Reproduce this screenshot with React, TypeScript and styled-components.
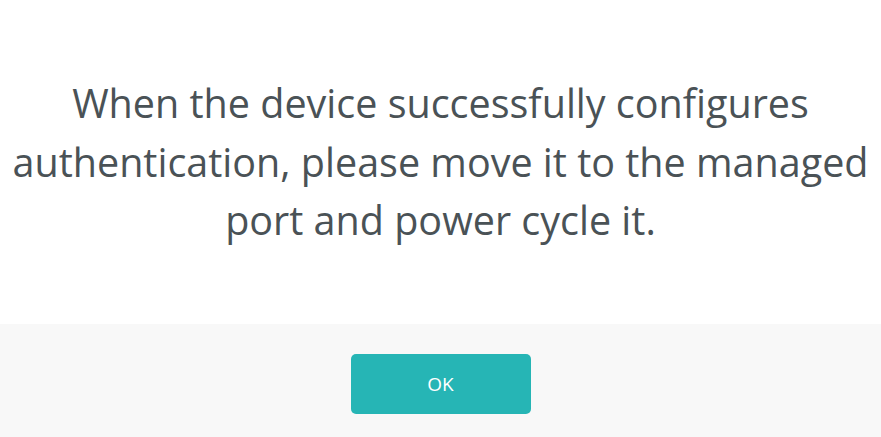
import React from 'react';
import styled, { createGlobalStyle } from 'styled-components';

const GlobalStyle = createGlobalStyle`
  html, body {
    margin: 0;
    padding: 0;
    background: #ffffff;
  }
  body {
    font-family: "Open Sans", "Noto Sans", sans-serif;
  }
`;

const Dialog = styled.div`
  width: 881px;
  height: 437px;
  display: flex;
  flex-direction: column;
  background: #ffffff;
`;

const Body = styled.div`
  height: 324px;
  box-sizing: border-box;
  display: flex;
  align-items: center;
  justify-content: center;
  padding: 0 6px;
`;

const Message = styled.p`
  margin: 0;
  font-size: 39.5px;
  line-height: 58.5px;
  color: #4a5256;
  text-align: center;
`;

const Footer = styled.div`
  flex: 1;
  background: #f8f8f8;
  display: flex;
  justify-content: center;
  padding-top: 30px;
`;

const OkButton = styled.button`
  width: 180px;
  height: 60px;
  border: 0;
  border-radius: 5px;
  background: #26b5b5;
  color: #ffffff;
  font-family: "Open Sans", "Noto Sans", sans-serif;
  font-size: 19px;
  cursor: pointer;
`;

const App = () => (
  <>
    <GlobalStyle />
    <Dialog>
      <Body>
        <Message>
          When the device successfully configures authentication, please move it to the managed port and power cycle it.
        </Message>
      </Body>
      <Footer>
        <OkButton>OK</OkButton>
      </Footer>
    </Dialog>
  </>
);

export default App;
